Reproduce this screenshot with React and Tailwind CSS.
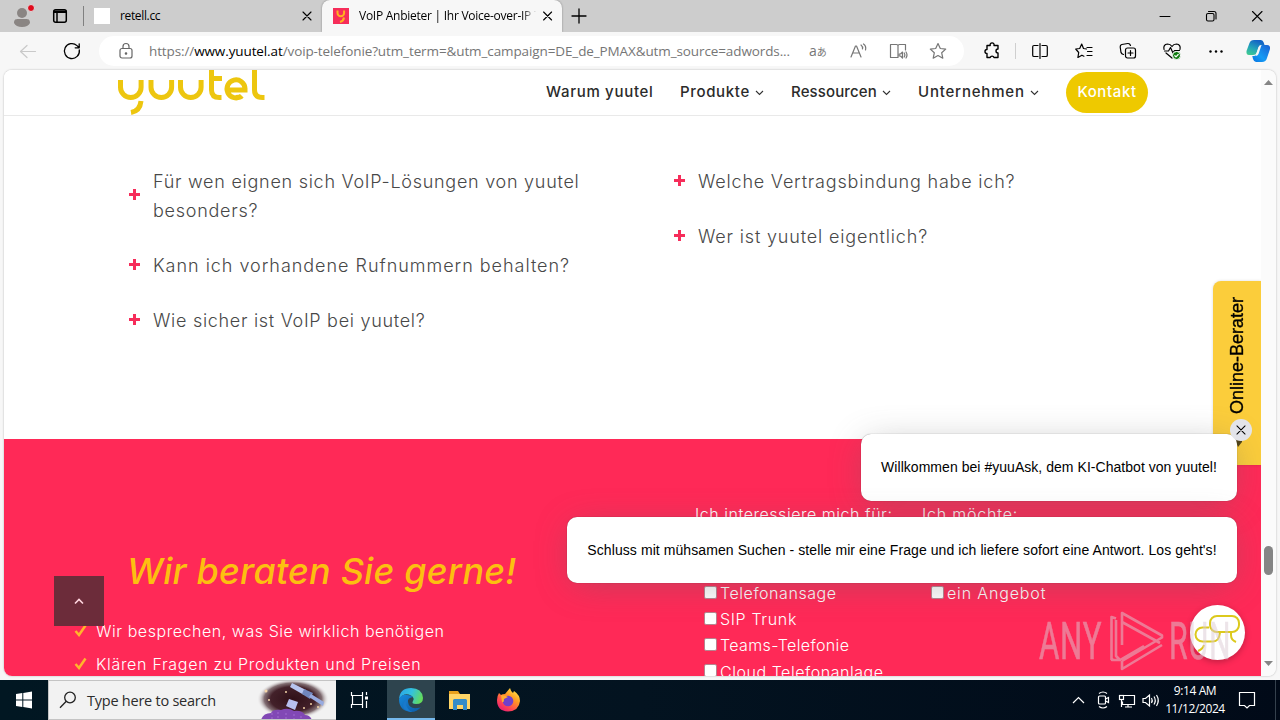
import React from "react";

const ui = "font-['Open_Sans','Noto_Sans_CJK_JP',sans-serif]";
const brand = "font-['Inter',sans-serif]";

function Icon({ children, className = "", size = 20, sw = 1.2 }) {
  return (
    <svg width={size} height={size} viewBox="0 0 20 20" fill="none" stroke="currentColor" strokeWidth={sw} strokeLinecap="round" strokeLinejoin="round" className={"shrink-0 " + className}>
      {children}
    </svg>
  );
}

function TabBar() {
  return (
    <div className="flex h-8 items-center bg-[#cdcdcd] text-[12px] text-black">
      <svg width="40" height="32" className="shrink-0">
        <circle cx="22" cy="13" r="5" fill="#8a8583" />
        <path d="M14 23c0-5 3-4 8-4s8-1 8 4q-2 4-8 4t-8-4z" fill="#8a8583" />
        <circle cx="31" cy="8" r="3.5" fill="#e00b1c" stroke="#dedede" strokeWidth="1" />
      </svg>
      <Icon className="ml-[10px]" sw={1.5}>
        <rect x="3.7" y="3.7" width="12.6" height="12.6" rx="2" />
        <path d="M4 5.3h12M4 6.3h12M7 6v10" />
      </Icon>
      <div className="ml-[13px] h-5 w-px bg-[#808080]" />
      <div className="ml-[10px] size-4 bg-white" />
      <span className="ml-[10px] w-[179px] tracking-[-0.35px]">retell.cc</span>
      <Icon size={16} sw={1.4}><path d="M5 5l10 10M15 5L5 15" /></Icon>
      <div className="ml-[7px] flex h-8 w-[240px] items-center rounded-t-lg bg-[#f7f7f7] pl-[11px] shadow-[0_0_2px_rgba(0,0,0,0.4)] [clip-path:inset(0_-3px)]">
        <svg width="16" height="16" className="shrink-0">
          <rect width="16" height="16" fill="#f62d5a" />
          <path d="M4.5 2.5v2.5a3.3 3.3 0 0 0 6.6 0V2.500M11 9.500q-.5 3.500-4 4.500" fill="none" stroke="#ffb21f" strokeWidth="2" />
        </svg>
        <div className="ml-[10px] w-[181px] overflow-hidden whitespace-nowrap tracking-[-0.26px] [mask-image:linear-gradient(to_right,black_90%,transparent_98%)]">
          VoIP Anbieter | Ihr Voice-over-IP T
        </div>
        <Icon size={16} sw={1.4}><path d="M4.500 5l10 10M14.500 5l-10 10" /></Icon>
      </div>
      <Icon className="ml-[7px]" size={20} sw={1.3}><path d="M10 3v14M3 10h14" /></Icon>
      <div className="grow" />
      <Icon className="mr-[26px]" sw={1}><path d="M5 10.500h10" /></Icon>
      <Icon className="mr-[26px]" sw={1.1}>
        <rect x="5.500" y="7.500" width="7.500" height="7.500" rx="1.500" />
        <path d="M7.500 5.500h5.500a2 2 0 0 1 2 2v5.500" />
      </Icon>
      <Icon className="mr-[13px]" sw={1.1}><path d="M5.500 5.500l9.500 9.500M15 5.500L5.500 15" /></Icon>
    </div>
  );
}

function Toolbar() {
  return (
    <div className="flex h-[38px] items-center bg-[#f7f7f7] text-black">
      <Icon className="ml-[18px] text-[#c9c9c9]"><path d="M2.500 10.500h15M9 4.500l-6.500 6 6.500 6" /></Icon>
      <Icon className="ml-6" sw={1.3}><path d="M17.300 9a7.500 7.500 0 1 1-2.300-4.400L17 6.500M17.200 2.800v4h-4" /></Icon>
      <div className="ml-[17px] flex h-[30px] w-[865px] items-center rounded-full bg-white text-[#767676]">
        <Icon className="ml-[17px] text-[#666]">
          <rect x="4" y="7.500" width="12" height="9.500" rx="2" />
          <path d="M7 7.500V5.500a3 3 0 0 1 6 0v2" />
          <circle cx="10" cy="12.500" r=".7" fill="currentColor" />
        </Icon>
        <div className="ml-[13px] w-[660px] whitespace-nowrap text-[13.500px] tracking-[-0.11px]">
          https://<span className="text-black">www.yuutel.at</span>/voip-telefonie?utm_term=&amp;utm_campaign=DE_de_PMAX&amp;utm_source=adwords...
        </div>
        <span className="w-[39px] whitespace-nowrap text-[14px] leading-none">a<span className="text-[10px]">あ</span></span>
        <Icon size={20}>
          <path d="M3 16L7.500 5h1L13 16M4.700 12h6.600M13 4q2 1.500 1.500 4M15.500 3q3 2 2 6" />
        </Icon>
        <Icon className="ml-5">
          <path d="M10 16.500H2.500v-13h6q1.500 0 1.500 1.500v11.500M10 5q0-1.500 1.500-1.500h6V9" />
          <path d="M11 13v2h1.500l2 2v-6l-2 2zM16.200 12q1.300 2 0 4M18 11q2 3 0 6" />
        </Icon>
        <Icon className="ml-5"><path d="M10 2.500l2.300 5 5.400.6-4 3.700 1.100 5.400-4.800-2.700-4.800 2.700 1.100-5.400-4-3.700 5.400-.6z" /></Icon>
      </div>
      <Icon className="ml-[18px]" sw={1.400}>
        <path d="M5 4.500h3.200a2 2 0 1 1 3.800 0H16V8a2 2 0 0 0 0 4v4.500h-4a2 2 0 0 0-3.800 0H5V12.500a2 2 0 1 1 0-4z" />
      </Icon>
      <div className="ml-[13px] h-4 w-px bg-[#cfcfcf]" />
      <Icon className="ml-[14px]"><path d="M8 4.500H4a1.300 1.300 0 0 0-1.300 1.300v8.400A1.300 1.300 0 0 0 4 15.500h4M12 4.500h4a1.300 1.300 0 0 1 1.300 1.300v8.400a1.300 1.300 0 0 1-1.300 1.300h-4M10 2.500v15" /></Icon>
      <Icon className="ml-6"><path d="M12.500 8L9.500 7.500 7.700 3l-2 4.500-4 .5 3 3.500-.8 5 4-2.300 2 1M13 6.500h5M13.500 10.500H18M13 14.500h5" /></Icon>
      <Icon className="ml-6">
        <rect x="7.500" y="7" width="10" height="10" rx="2" />
        <path d="M12.500 9.500v5M10 12h5M5.500 13.500q-2-.5-2.500-2L2.200 6q-.2-2 1.600-2.500l6-1q2-.2 2.700 2" />
      </Icon>
      <Icon className="ml-6">
        <path d="M2 8.500Q1 3.500 5.500 3q3 0 4.500 2.500Q11.500 3 14.500 3q4.500.5 3.500 5.500M2.500 10h4l2-3.500 2.500 5.500 1.500-2.500h5M4 12l6 5" />
        <circle cx="14.500" cy="14.500" r="4" fill="#107c10" stroke="#f7f7f7" strokeWidth="1" />
        <path d="M12.800 14.700l1.200 1.100 2.200-2.300" stroke="#fff" />
      </Icon>
      <Icon className="ml-6"><g fill="currentColor" stroke="none"><circle cx="4.500" cy="10.500" r="1.200" /><circle cx="10" cy="10.500" r="1.200" /><circle cx="15.500" cy="10.500" r="1.200" /></g></Icon>
      <svg width="26" height="26" viewBox="0 0 26 26" className="ml-[19px] shrink-0">
        <defs>
          <linearGradient id="cpa" x1="0" y1="1" x2=".5" y2="0"><stop stopColor="#43d08a" /><stop offset=".5" stopColor="#23a4b9" /><stop offset="1" stopColor="#1464c5" /></linearGradient>
          <linearGradient id="cpb" x1="1" y1="0" x2="0" y2="1"><stop stopColor="#1c5fd0" /><stop offset=".6" stopColor="#159bf5" /><stop offset="1" stopColor="#0872e0" /></linearGradient>
        </defs>
        <path d="M9 2h7q2 0 2.700 2.500L19.500 7h-3q-2 0-2.700 2l-2 5.500Q11 17 8 17H4Q1 17 1.500 13L4.500 5Q5.500 2 9 2z" fill="url(#cpa)" />
        <path d="M17 24h-6q-2 0-3-3l-.700-3h2q2 0 3-3l2-6q.700-2 3-2H22q3.500 0 3 4l-3 9q-1 4-5 4z" fill="url(#cpb)" />
        <path d="M13.500 9q1-2 3-2l-3 9q-1 2-3 2z" fill="#f7f7f7" />
      </svg>
    </div>
  );
}

function Chevron() {
  return <svg width="9" height="6" className="ml-[5px] mt-px shrink-0"><path d="M1 1l3.500 3.500L8 1" fill="none" stroke="#333" strokeWidth="1.100" /></svg>;
}

function SiteHeader() {
  return (
    <div className={"flex h-[46px] shrink-0 items-center border-b border-[#e9e9e9] bg-white text-[15px] font-medium text-[#2b2b2b] " + brand}>
      <svg width="152" height="45" viewBox="116 70 152 45" className="ml-[112px] shrink-0">
        <g fill="none" stroke="#edc60f" strokeWidth="5">
          <path d="M120.500 80v7.300a10.300 10.300 0 0 0 20.600 0V80M141 101q-1 10-10 11.500" />
          <path d="M151 80v7.300a10.300 10.300 0 0 0 20.600 0V80M180.500 80v7.300a10.300 10.300 0 0 0 20.600 0V80" />
          <path d="M211.500 69v21q0 7.500 8 7.500h2M211.500 78.500h10.500" />
          <path d="M227 90h18v-1.500a9 9 0 1 0-3.500 7.500q-1 1.500-6 1.500" />
          <path d="M254.500 69v21q0 7.500 8 7.500h2" />
        </g>
      </svg>
      <span className="ml-[278px] w-[134px] whitespace-nowrap tracking-[0.7px]">Warum yuutel</span>
      <span className="flex w-[111px] items-center tracking-[0.65px]">Produkte<Chevron /></span>
      <span className="flex w-[127px] items-center tracking-[0.12px]">Ressourcen<Chevron /></span>
      <span className="flex w-[148px] items-center tracking-[0.8px]">Unternehmen<Chevron /></span>
      <span className="flex h-[41px] w-[82px] items-center justify-center rounded-full bg-[#eec900] tracking-[0.6px] text-white">Kontakt</span>
    </div>
  );
}

function Faq({ children, className = "" }) {
  return (
    <div className={"mb-[26px] flex items-center " + className}>
      <svg width="11" height="11" className="-mt-[3px] mr-[13px] shrink-0"><path d="M5.500 0v11M0 5.500h11" stroke="#f62d5a" strokeWidth="3" /></svg>
      <p className="leading-[29px]">{children}</p>
    </div>
  );
}

function Check({ children, className = "" }) {
  return (
    <div className={"flex h-[33px] items-center whitespace-nowrap " + className}>
      <svg width="13" height="13" className="mr-[9px] shrink-0"><path d="M1.500 7l3.500 4L11.500 1.500" fill="none" stroke="#ffb52b" strokeWidth="2.500" /></svg>
      {children}
    </div>
  );
}

function Box({ children, className = "" }) {
  return (
    <div className={"flex h-[26.200px] items-center whitespace-nowrap pl-[9px] " + className}>
      <span className="-mt-[2px] mr-[3px] size-[13px] shrink-0 rounded-[2px] border border-[#b5848f] bg-white" />
      {children}
    </div>
  );
}

function Page() {
  return (
    <div className="relative flex w-[1257px] shrink-0 flex-col overflow-hidden bg-white">
      <SiteHeader />
      <div className={"flex h-[323px] shrink-0 pl-[125px] pt-[51px] text-[18px] font-light text-[#484848] " + brand}>
        <div className="w-[545px]">
          <Faq className="tracking-[0.73px]">Für wen eignen sich VoIP-Lösungen von yuutel<br />besonders?</Faq>
          <Faq className="tracking-[0.97px]">Kann ich vorhandene Rufnummern behalten?</Faq>
          <Faq className="tracking-[0.7px]">Wie sicher ist VoIP bei yuutel?</Faq>
        </div>
        <div>
          <Faq className="tracking-[0.8px]">Welche Vertragsbindung habe ich?</Faq>
          <Faq className="tracking-[0.83px]">Wer ist yuutel eigentlich?</Faq>
        </div>
      </div>
      <div className={"flex h-[237px] shrink-0 overflow-hidden bg-[#ff2957] text-[16px] font-light text-white " + brand}>
        <div className="w-[691px] shrink-0 pl-[70px] pt-[108px]">
          <h2 className="mb-[19px] ml-[53px] whitespace-nowrap text-[36px] font-medium italic leading-[48px] tracking-[0.18px] text-[#fcbf10]">Wir beraten Sie gerne!</h2>
          <Check className="tracking-[0.55px]">Wir besprechen, was Sie wirklich benötigen</Check>
          <Check className="tracking-[0.69px]">Klären Fragen zu Produkten und Preisen</Check>
        </div>
        <div className="w-[227px] shrink-0 pt-[63px]">
          <p className="mb-[54px] leading-[24px] tracking-[0.54px]">Ich interessiere mich für:</p>
          <Box className="tracking-[0.55px]">Telefonansage</Box>
          <Box className="tracking-[0.65px]">SIP Trunk</Box>
          <Box className="tracking-[0.38px]">Teams-Telefonie</Box>
          <Box className="tracking-[0.54px]">Cloud Telefonanlage</Box>
        </div>
        <div className="pt-[63px]">
          <p className="mb-[54px] leading-[24px] tracking-[0.8px]">Ich möchte:</p>
          <Box className="tracking-[0.85px]">ein Angebot</Box>
        </div>
      </div>

      <div className="absolute left-[50px] top-[506px] flex size-[50px] items-center justify-center bg-[#642c39]/95">
        <svg width="10" height="7"><path d="M1 5.500L5 1.500l4 4" fill="none" stroke="#ffd5df" strokeWidth="1.600" /></svg>
      </div>
      <div className="absolute right-0 top-[211px] h-[184px] w-12 rounded-tl-lg bg-[#fbcd3b] pl-3 pt-4 shadow-[0_0_3px_rgba(0,0,0,0.15)]">
        <span className="block h-[118px] w-6 rotate-180 whitespace-nowrap text-right font-['Liberation_Sans',sans-serif] text-[18px] leading-6 text-black [-webkit-text-stroke:0.35px_black] [writing-mode:vertical-rl]">Online-Berater</span>
      </div>
      <svg width="10" height="12" className="absolute left-[1229px] top-[367px]"><path d="M2 2h7v3L5 10z" fill="#4f4215" /></svg>
      <div className="absolute left-[857px] top-[364px] flex h-[67px] w-[376px] items-center justify-center whitespace-nowrap rounded-[10px] bg-white font-['Liberation_Sans',sans-serif] text-[14px] tracking-[0.04px] text-black shadow-[0_5px_36px_-6px_rgba(100,100,100,0.45),0_0_1px_rgba(0,0,0,0.5)]">
        Willkommen bei #yuuAsk, dem KI-Chatbot von yuutel!
      </div>
      <div className="absolute left-[563px] top-[447px] flex h-[66px] w-[670px] items-center justify-center whitespace-nowrap rounded-[10px] bg-white font-['Liberation_Sans',sans-serif] text-[14px] tracking-[0.08px] text-black shadow-[0_5px_36px_-6px_rgba(100,100,100,0.45),0_0_1px_rgba(0,0,0,0.5)]">
        Schluss mit mühsamen Suchen - stelle mir eine Frage und ich liefere sofort eine Antwort. Los geht's!
      </div>
      <div className="absolute left-[1226px] top-[349px] flex size-[22px] items-center justify-center rounded-full bg-[#e3e4e9]">
        <Icon size={18} className="text-black"><path d="M5.500 5.500l9 9M14.500 5.500l-9 9" /></Icon>
      </div>
      <div className="absolute left-[1186px] top-[535px] size-[55px] rounded-full bg-white shadow-[0_2px_6px_rgba(0,0,0,0.25)]">
        <svg width="55" height="55" viewBox="0 0 55 55" fill="none" stroke="#dcc91c" strokeWidth="2">
          <path d="M41 27H27a7 7 0 0 1-7-7v-2a7 7 0 0 1 7-7H42a7 7 0 0 1 7 7v2a7 7 0 0 1-7 7h-1v3q0 5 5 7" />
          <path d="M19 22.500H12.500a6.500 6.500 0 0 0 0 14H23q6 0 7-9M14 40q-1 4-6 6" />
        </svg>
      </div>
      <svg width="204" height="70" viewBox="1034 606 204 70" className="absolute left-[1030px] top-[536px] opacity-50">
        <g fill="#dccbd4" stroke="#dccbd4" strokeWidth=".6" className="font-['Roboto',sans-serif]" fontSize="52" fontWeight="400">
          <text x="1039" y="659" textLength="104" lengthAdjust="spacing" transform="translate(1039 0) scale(.6 1) translate(-1039 0)">ANY</text>
          <text x="1169" y="659" textLength="106" lengthAdjust="spacing" transform="translate(1169 0) scale(.58 1) translate(-1169 0)">RUN</text>
        </g>
        <path d="M1116 618.500l-4.500-1.500v43M1112 658v2l8 0 24-14M1122 645v-32l40 22.500v2l-40 23.500M1122 622l38 21M1122 661v8l40-24M1116 620v36l4 4" fill="none" stroke="#dccbd4" strokeWidth="2.600" strokeLinejoin="round" />
      </svg>
    </div>
  );
}

function Scrollbar() {
  return (
    <div className="flex w-[15px] flex-col items-center bg-[#fbfbfb]">
      <svg width="9" height="5" className="mt-[10px]"><path d="M0 5L4.500 0 9 5z" fill="#858585" /></svg>
      <div className="mt-[461px] h-[29px] w-[9px] rounded-full bg-[#858585]" />
      <svg width="9" height="5" className="mt-[86px]"><path d="M0 0l4.500 5L9 0z" fill="#858585" /></svg>
    </div>
  );
}

function Taskbar() {
  return (
    <div className="flex h-10 items-center bg-gradient-to-r from-[#011722] via-[#031320] to-[#010a18] text-white">
      <svg width="48" height="40" className="shrink-0"><path d="M16 14l6.300-1v6.500H16zM23.300 12.900l8.700-1.300v7.900h-8.700zM16 20.500h6.300V27L16 26zM23.300 20.500H32v7.900l-8.700-1.300z" fill="#fff" /></svg>
      <div className="flex h-10 w-[288px] items-center overflow-hidden border-y border-l border-[#c4c4c4] bg-[#f2f2f2] text-[#2c2c2c]">
        <svg width="18" height="18" className="ml-[10px] shrink-0"><g fill="none" stroke="#222" strokeWidth="1.300"><circle cx="11" cy="6.500" r="5.300" /><path d="M7.300 10.300L1 16.700" /></g></svg>
        <span className="ml-[10px] mt-[2px] w-[171px] whitespace-nowrap text-[14.500px] tracking-[-0.24px]">Type here to search</span>
        <svg width="78" height="40" className="shrink-0">
          <defs>
            <radialGradient id="sky"><stop stopColor="#301018" /><stop offset=".62" stopColor="#43212a" /><stop offset=".8" stopColor="#5b4147" stopOpacity=".75" /><stop offset="1" stopColor="#f2f2f2" stopOpacity="0" /></radialGradient>
          </defs>
          <ellipse cx="35" cy="19" rx="36" ry="20" fill="url(#sky)" />
          <path d="M34 3l14 7-2 5-14-8z" fill="#b7c5ef" /><path d="M46 9l9 4-3 6-8-5z" fill="#7086bd" /><path d="M53 14l13 8-1 4-14-9z" fill="#98abe0" />
          <path d="M31 19l9 3-3 8-9-4z" fill="#b8c0ef" />
          <path d="M3 40q2-7 10-7 2-4 10-3 7-3 13 1 8-1 11 4 5 0 7 5z" fill="#8148b5" />
          <path d="M14 33v7M20 32v8M28 33v7M36 34v6M43 36v4" stroke="#a16ad0" strokeDasharray="2 2" />
          <g fill="#f5d6a9"><circle cx="8" cy="11" r="1.500" /><circle cx="11" cy="20" r="1" /><circle cx="28" cy="12" r="1" /><circle cx="46" cy="28" r="1" /><circle cx="60" cy="27" r="1" /><circle cx="53" cy="24" r="1" /></g>
        </svg>
      </div>
      <svg width="51" height="40" className="shrink-0"><path d="M15.500 12v3.500h11V12M15.500 28v-3.500h11V28M16.500 15.500v9M26.500 15.500v9M30.500 12v3M30.500 21v7" fill="none" stroke="#fff" strokeWidth="1.200" /><path d="M29 16.500h3v3h-3z" fill="#fff" /></svg>
      <div className="flex h-10 w-12 items-center justify-center border-b-2 border-[#76b9ed] bg-[#2e444e]">
        <svg width="24" height="24" viewBox="0 0 24 24" className="mt-px">
          <defs>
            <linearGradient id="ea" x1="0" y1=".2" x2="1" y2=".5"><stop stopColor="#2aa5e5" /><stop offset=".5" stopColor="#33c1df" /><stop offset="1" stopColor="#64dc5a" /></linearGradient>
            <linearGradient id="eb" x1="0" y1="0" x2="1" y2="1"><stop stopColor="#1689dc" /><stop offset="1" stopColor="#0c59a4" /></linearGradient>
          </defs>
          <path d="M0 11Q1 0 12 0q11 0 12 10 0 6-7 6-5 0-3-3 2-3-2-5.500Q5 4 0 11z" fill="url(#ea)" />
          <path d="M0 11q3-5 8-4 4 0 6 2-6 1-5 5 1 7 9 6 3 0 4-1-4 5-10 5Q0 23 0 11z" fill="url(#eb)" />
          <path d="M9.500 11q-3 3-2 7 2 5 6 6Q2 23 4.500 15q1-3 5-4z" fill="#1979cb" />
        </svg>
      </div>
      <svg width="49" height="40" className="shrink-0">
        <path d="M14 11h9l2 3h10v4H14z" fill="#e8a11d" /><path d="M14 14h21v15H14z" fill="#ffd567" />
        <path d="M18 20.500q0-1.500 1.500-1.500h11q1.500 0 1.500 1.500V30h-4v-5h-6v5h-4z" fill="#338cc9" />
      </svg>
      <svg width="48" height="40" viewBox="0 0 48 40" className="shrink-0">
        <defs><linearGradient id="ff" x1=".9" y1="0" x2=".2" y2="1"><stop stopColor="#fff44f" /><stop offset=".4" stopColor="#ff9a23" /><stop offset=".75" stopColor="#ff4355" /><stop offset="1" stopColor="#e61b77" /></linearGradient></defs>
        <path d="M15 13l2 2q1-1 4-1l5-6q1 4 3 5l1-2q6 4 6 10-1 10-12 10.500Q13 31 13 20q0-4 2-7z" fill="url(#ff)" />
        <circle cx="24" cy="21" r="5.300" fill="#7140cc" />
        <path d="M17 15q4 0 7 2l-4 2q0 4-2 3z" fill="#ffad2e" />
      </svg>
      <div className="grow" />
      <svg width="94" height="40" viewBox="1069 680 94 40" className="shrink-0" fill="none" stroke="#fff" strokeWidth="1.200">
        <path d="M1073 703l5.500-5.500L1084 703" />
        <rect x="1098.500" y="696" width="7" height="8" rx="1" /><path d="M1105.500 699l3-1.500v5l-3-1.500M1099 693.500q4-3 8 0M1099 706.500q4 3 8 0" />
        <path d="M1124 695.500h10.500v9h-12v-3M1128 704.500v3M1125 707h7" /><rect x="1119.500" y="695.500" width="4" height="4" /><path d="M1121.500 700v7" />
        <path d="M1143 698.500h2.500l4-3.500v11l-4-3.500h-2.500zM1151.500 698q1.500 2.500 0 5M1154 696.500q2.500 4 0 8M1156.500 695q3.500 5.500 0 11" />
      </svg>
      <div className="w-[64px] whitespace-nowrap text-center text-[12px] leading-[18px] tracking-[-0.4px]">9:14 AM<br />11/12/2024</div>
      <svg width="53" height="40" className="shrink-0"><path d="M12.500 12.500h15v13h-5l-2.500 2.500-2.500-2.500h-5z" fill="none" stroke="#fff" strokeWidth="1.200" /><path d="M48.500 0v40" stroke="#35414d" /></svg>
    </div>
  );
}

export default function App() {
  return (
    <div className={"flex h-[720px] w-[1280px] flex-col overflow-hidden bg-[#f7f7f7] " + ui}>
      <TabBar />
      <Toolbar />
      <div className="mx-1 mb-1 flex h-[606px] shrink-0 overflow-hidden rounded-lg shadow-[0_0_2px_rgba(0,0,0,0.3)]">
        <Page />
        <Scrollbar />
      </div>
      <Taskbar />
    </div>
  );
}
